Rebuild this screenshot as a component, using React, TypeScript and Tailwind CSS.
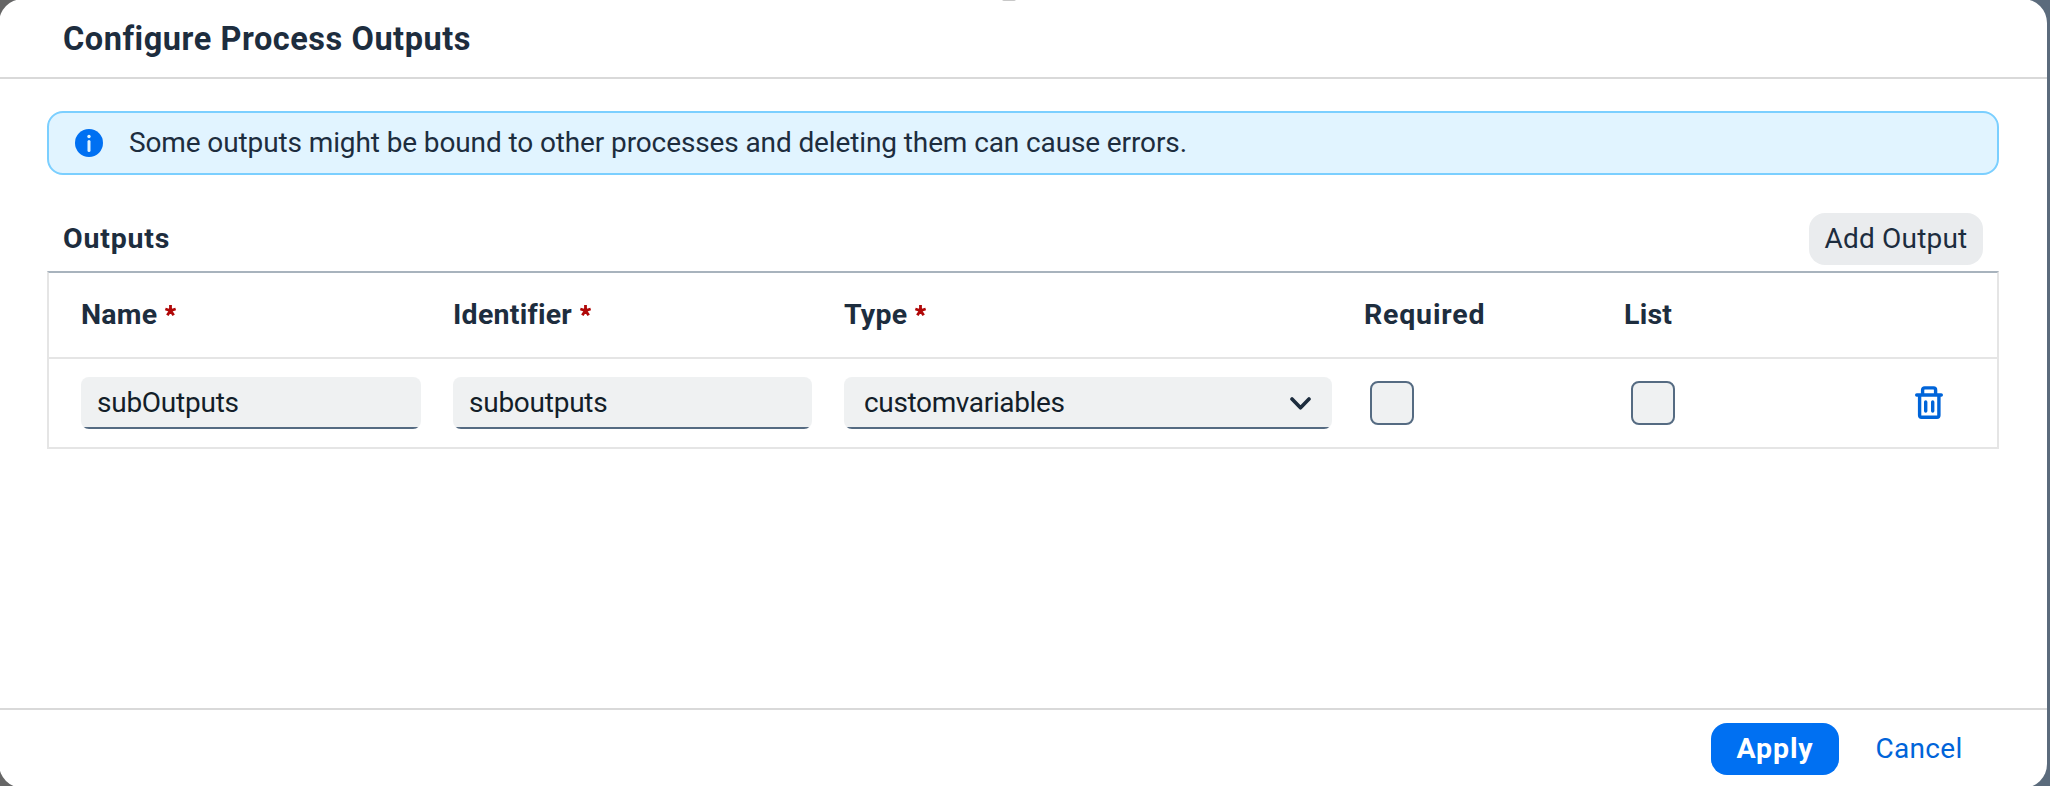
import React from "react";

function Asterisk() {
  return (
    <svg className="ml-2 h-[11px] w-[11px] shrink-0 -translate-y-[5px]" viewBox="0 0 11 11" fill="none" stroke="#b00808" strokeWidth="2.8">
      <path d="M5.5 5.6V0M5.5 5.6L.3 4M5.5 5.6L10.7 4M5.5 5.6L2.3 10.2M5.5 5.6L8.7 10.2" />
    </svg>
  );
}

const cols = "grid grid-cols-[372px_391px_522px_260px_273px_1fr] items-center pl-8";
const field =
  "flex h-[52px] items-center overflow-hidden rounded-lg bg-[linear-gradient(#556b82,#556b82)] bg-[length:100%_2px] bg-bottom bg-no-repeat bg-[#eff1f2]";

export default function App() {
  return (
    <div className="h-[786px] w-[2050px] overflow-hidden bg-gradient-to-r from-[#666] to-[#5b6b7c] font-['Roboto',sans-serif] text-[28px] leading-8 text-[#1d2d3e]">
      <div className="relative -mt-px -ml-px flex h-[789px] w-[2048px] flex-col overflow-hidden rounded-3xl bg-white">
        <div className="absolute top-0 left-[1003px] h-0.5 w-3.5 rounded-b-full bg-[#c8c8c8]" />
        <header className="flex h-20 shrink-0 items-center justify-between border-b-2 border-[#d9d9d9] pt-0.5 pl-16 text-[32.5px] font-bold">
          <h1 className="tracking-[0.54px]">Configure Process Outputs</h1>
        </header>
        <main className="flex flex-1 flex-col pr-12 pl-12">
          <div className="mt-8 flex h-16 shrink-0 items-center rounded-2xl border-2 border-[#7bcfff] bg-[#e1f4ff] pl-[26px]">
            <svg className="mr-[26px] h-7 w-7" viewBox="0 0 28 28">
              <circle cx="14" cy="14" r="14" fill="#0070f2" />
              <circle cx="14" cy="7.5" r="1.7" fill="#e1f4ff" />
              <rect x="12.5" y="11" width="3" height="12" rx="1.5" fill="#e1f4ff" />
            </svg>
            <p className="tracking-[-0.115px]">Some outputs might be bound to other processes and deleting them can cause errors.</p>
          </div>
          <div className="mt-[38px] flex h-[58px] shrink-0 items-start justify-between pr-4 pl-4">
            <h2 className="pt-[10px] text-[28.5px] font-bold tracking-[0.8px]">Outputs</h2>
            <button className="h-[52px] w-[174px] rounded-2xl bg-[#eaecee] tracking-[0.2px]">Add Output</button>
          </div>
          <div className="h-[178px] shrink-0 border-2 border-[#e5e5e5] border-t-[#a8b3bd]">
            <div className={`${cols} h-[86px] border-b-2 border-[#e5e5e5] text-[28.5px] font-bold tracking-[0.25px]`}>
              <div className="flex items-center">Name<Asterisk /></div>
              <div className="flex items-center">Identifier<Asterisk /></div>
              <div className="flex items-center">Type<Asterisk /></div>
              <div className="-ml-0.5 tracking-[0.8px]">Required</div>
              <div className="-ml-0.5">List</div>
            </div>
            <div className={`${cols} h-[88px] tracking-[-0.25px] text-[#131e29]`}>
              <div className={`${field} w-[340px] pl-4`}>subOutputs</div>
              <div className={`${field} w-[359px] pl-4`}>suboutputs</div>
              <div className={`${field} w-[488px] justify-between pr-[21px] pl-5 tracking-[-0.35px]`}>
                customvariables
                <svg className="h-[13px] w-[21px]" viewBox="0 0 21 13" fill="none" stroke="#1d2d3e" strokeWidth="3.6" strokeLinecap="round" strokeLinejoin="round">
                  <path d="M2 2L10.5 10.8L19 2" />
                </svg>
              </div>
              <div className="ml-1 h-11 w-11 rounded-lg border-2 border-[#556b82] bg-[#eff1f2]" />
              <div className="ml-[5px] h-11 w-11 rounded-lg border-2 border-[#556b82] bg-[#eff1f2]" />
              <svg className="-mt-0.5 ml-4 h-[33px] w-7" viewBox="0 0 28 33" fill="none" stroke="#0064d9" strokeWidth="3.4" strokeLinecap="round" strokeLinejoin="round">
                <path d="M1.7 9H26.3M4.6 9V29.3Q4.6 31.2 6.5 31.2H22Q23.9 31.2 23.9 29.3V9M7.6 9V3.9Q7.6 1.9 9.6 1.9H18.6Q20.6 1.9 20.6 3.9V9M10.7 16V25M17.7 16V25" />
              </svg>
            </div>
          </div>
        </main>
        <footer className="flex h-20 shrink-0 items-start justify-end border-t-2 border-[#d9d9d9] pt-[13px] pr-[67px]">
          <button className="h-[52px] w-32 rounded-2xl bg-[#0070f2] text-[28.5px] font-bold tracking-[0.9px] text-white">Apply</button>
          <button className="ml-[18px] h-[52px] w-[123px] pl-px tracking-[0.3px] text-[#0064d9]">Cancel</button>
        </footer>
      </div>
    </div>
  );
}
